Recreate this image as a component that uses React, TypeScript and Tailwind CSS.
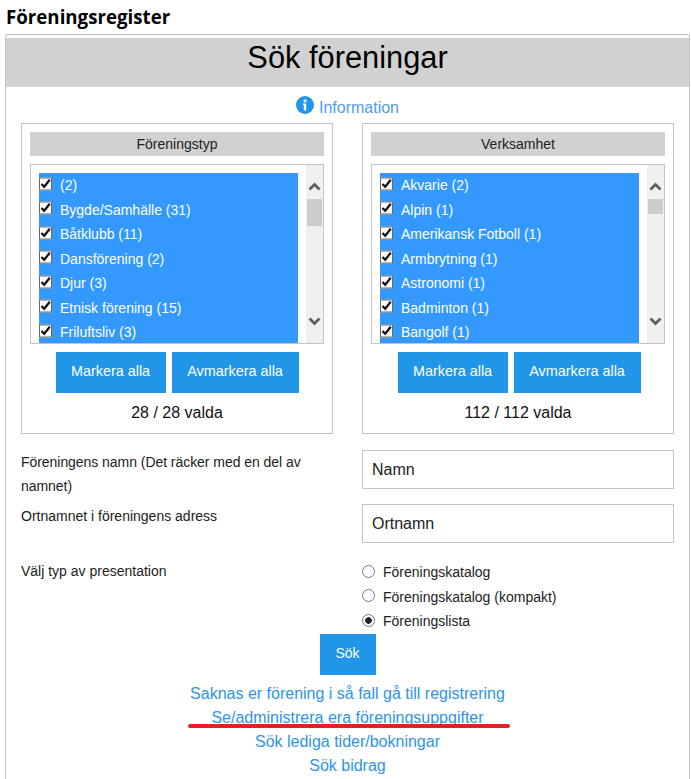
import { useState } from 'react';

const typer = ['(2)', 'Bygde/Samhälle (31)', 'Båtklubb (11)', 'Dansförening (2)', 'Djur (3)', 'Etnisk förening (15)', 'Friluftsliv (3)'];
const verksamheter = ['Akvarie (2)', 'Alpin (1)', 'Amerikansk Fotboll (1)', 'Armbrytning (1)', 'Astronomi (1)', 'Badminton (1)', 'Bangolf (1)'];
const links = ['Saknas er förening i så fall gå till registrering', 'Se/administrera era föreningsuppgifter', 'Sök lediga tider/bokningar', 'Sök bidrag'];
const presentationer = ['Föreningskatalog', 'Föreningskatalog (kompakt)', 'Föreningslista'];

function ScrollBar({ thumb }: { thumb: string }) {
  return (
    <div className="w-[17px] shrink-0 bg-[#f0f0f0] flex flex-col items-center pt-[17px] pb-[17px] h-full">
      <svg width="13" height="9" viewBox="0 0 13 9" className="shrink-0">
        <path d="M1.500 7.500 L6.500 2.500 L11.500 7.500" fill="none" stroke="#606060" strokeWidth="2.800" />
      </svg>
      <div className={`mt-2 w-[15px] bg-[#cdcdcd] shrink-0 ${thumb}`} />
      <div className="flex-1" />
      <svg width="13" height="9" viewBox="0 0 13 9" className="shrink-0">
        <path d="M1.500 1.500 L6.500 6.500 L11.500 1.500" fill="none" stroke="#606060" strokeWidth="2.800" />
      </svg>
    </div>
  );
}

function FilterBox({ title, items, count, thumb, buttons }: { title: string; items: string[]; count: string; thumb: string; buttons: string }) {
  return (
    <div className="w-[312px] h-[311px] border border-[#c4c4c4] px-2 pt-2">
      <div className="h-6 bg-[#d1d1d1] flex items-center justify-center text-sm text-[#222]">{title}</div>
      <div className="mt-2 h-[180px] border border-[#c4c4c4] flex justify-between overflow-hidden">
        <div className="mt-2 ml-2 w-[259px] h-[171px] bg-[#3399ff] overflow-hidden">
          {items.map((item) => (
            <label key={item} className="h-[24.5px] flex items-center text-sm text-white">
              <span className="relative w-[13px] h-[13px] shrink-0 -translate-y-[1.5px]">
                <input type="checkbox" defaultChecked className="peer appearance-none block w-[13px] h-[13px] m-0 border border-[#666] bg-white" />
                <svg width="13" height="13" viewBox="0 0 13 13" className="absolute left-0 top-0 hidden peer-checked:block pointer-events-none">
                  <path d="M2.500 6.500 L5.200 9.300 L10.800 2.200" fill="none" stroke="#111" strokeWidth="2.200" />
                </svg>
              </span>
              <span className="ml-2">{item}</span>
            </label>
          ))}
        </div>
        <ScrollBar thumb={thumb} />
      </div>
      <div className={`mt-2 flex justify-center gap-[6px] ${buttons}`}>
        <button className="h-[41px] w-[110px] pb-px bg-[#2196e8] text-[14.4px] text-white">Markera alla</button>
        <button className="h-[41px] w-[127px] pb-px bg-[#2196e8] text-[14.4px] text-white">Avmarkera alla</button>
      </div>
      <div className="mt-2 text-center text-base leading-6 text-[#111]">{count}</div>
    </div>
  );
}

export default function App() {
  const [pres, setPres] = useState('Föreningslista');

  return (
    <div className="h-[779px] overflow-hidden bg-white font-['Liberation_Sans',Arial,sans-serif] relative">
      <h1 className="h-[34px] pl-[6px] pt-[5px] font-['Open_Sans',sans-serif] text-[18.7px] leading-6 font-bold text-black">Föreningsregister</h1>

      <div className="ml-[5px] mr-px h-[760px] border border-b-0 border-[#c4c4c4] rounded-t-[3px] pt-[3px]">
        <div className="h-[49px] pb-[9px] bg-[#d1d1d1] flex items-center justify-center text-[30.8px] text-black">Sök föreningar</div>

        <div className="h-9 flex items-center justify-center gap-[5px] pt-[5px] text-base text-[#4f9de8]">
          <svg width="18" height="18" viewBox="0 0 18 18" className="-translate-y-[3px]">
            <circle cx="9" cy="9" r="9" fill="#2196e8" />
            <circle cx="9" cy="4.800" r="1.600" fill="#fff" />
            <path d="M7 7.600h3.200v6.800H7.800V9H7z" fill="#fff" />
          </svg>
          <span>Information</span>
        </div>

        <div className="pl-[15px] flex gap-[29px]">
          <FilterBox title="Föreningstyp" items={typer} count="28 / 28 valda" thumb="h-[27px]" buttons="" />
          <FilterBox title="Verksamhet" items={verksamheter} count="112 / 112 valda" thumb="h-[15px]" buttons="pl-[2px]" />
        </div>

        <div className="mt-4 pl-[15px] grid grid-cols-[341px_312px] text-sm text-[#222]">
          <div className="leading-6 pr-[20px] tracking-[-0.05px]">Föreningens namn (Det räcker med en del av namnet)</div>
          <input
            placeholder="Namn"
            className="h-[39px] border border-[#c4c4c4] px-[9px] text-base placeholder:text-[#222] outline-none"
          />
          <div className="mt-[6px] leading-6">Ortnamnet i föreningens adress</div>
          <input
            placeholder="Ortnamn"
            className="mt-[6px] h-[39px] border border-[#c4c4c4] px-[9px] text-base placeholder:text-[#222] outline-none"
          />
          <div className="mt-4 leading-6">Välj typ av presentation</div>
          <div className="mt-[17px] flex flex-col">
            {presentationer.map((p) => (
              <label key={p} className="h-[24.5px] flex items-center">
                <input
                  type="radio"
                  name="pres"
                  checked={pres === p}
                  onChange={() => setPres(p)}
                  className="appearance-none w-[13px] h-[13px] m-0 rounded-full border border-[#767676] bg-white checked:bg-[radial-gradient(circle,#222_3px,transparent_3.5px)] -translate-y-[1px]"
                />
                <span className="ml-2">{p}</span>
              </label>
            ))}
          </div>
        </div>

        <div className="flex justify-center">
          <button className="h-[41px] w-[56px] pb-[2px] bg-[#2196e8] text-sm text-white">Sök</button>
        </div>

        <div className="mt-[7px] flex flex-col items-center text-base leading-6 text-[#2f94e6]">
          {links.map((l) => (
            <a key={l} href="#">{l}</a>
          ))}
        </div>
      </div>

      {/* red marker drawn on top of the screenshot */}
      <div className="absolute left-[188px] top-[724px] w-[322px] h-[4px] rounded-full bg-[#ee1c25]" />
    </div>
  );
}
